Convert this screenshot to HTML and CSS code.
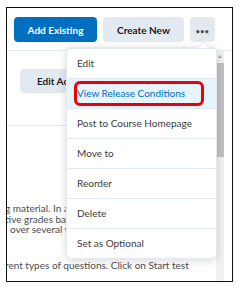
FILE: index.html
```html
<!DOCTYPE html>
<html lang="en">
<head>
    <meta charset="UTF-8">
    <title>Content Actions</title>
    <link rel="stylesheet" href="styles.css">
</head>
<body>
    <div class="frame">
        <div class="toolbar">
            <button class="btn btn-primary btn-add">Add Existing</button>
            <button class="btn btn-create">Create New</button>
            <button class="btn btn-more"><span class="dots">&bull;&bull;&bull;</span></button>
        </div>

        <div class="panel">
            <div class="content">
                <button class="btn btn-edit">Edit Activity</button>
                <hr class="divider">
                <p class="body-text">g material. In addition to the readings you will<br>tive grades based on the quizzes that are<br>l over several weeks of the term.</p>
                <p class="body-text last">rent types of questions. Click on Start test</p>
            </div>
            <div class="scrollbar">
                <div class="scroll-arrow"></div>
                <div class="scroll-thumb"></div>
            </div>
        </div>

        <!-- dropdown menu of the ... button -->
        <div class="menu">
            <div class="menu-caret"></div>
            <div class="menu-item">Edit</div>
            <div class="menu-item active">View Release Conditions<span class="highlight"></span></div>
            <div class="menu-item">Post to Course Homepage</div>
            <div class="menu-item">Move to</div>
            <div class="menu-item">Reorder</div>
            <div class="menu-item">Delete</div>
            <div class="menu-item">Set as Optional</div>
        </div>
    </div>
</body>
</html>
```

FILE: styles.css
```css
body {
    margin: 0;
    background: #fff;
    font-family: 'Lato', 'Liberation Sans', sans-serif;
    color: #494c4e;
}
.frame {
    position: relative;
    box-sizing: border-box;
    width: 227px;
    height: 275px;
    margin: 7px 0 0 6px;
    border: 1px solid #111;
    overflow: hidden;
}
.toolbar {
    display: flex;
    gap: 6px;
    padding: 9px 0 0 7px;
}
.btn {
    font-family: inherit;
    font-size: 10px;
    font-weight: 700;
    height: 25px;
    border: none;
    border-radius: 4px;
    padding: 0;
    color: #202122;
    background-color: #e3e9f1;
}
.btn-primary {
    background-color: #006fbf;
    color: #fff;
}
.btn-add {
    width: 83px;
}
.btn-create {
    width: 81px;
}
.btn-more {
    width: 25px;
}
.dots {
    font-size: 7px;
    letter-spacing: 0.5px;
    color: #494c4e;
}
.panel {
    display: flex;
    margin-top: 8px;
    padding-right: 8px;
    border-top: 1px solid #e3e9f1;
    height: 240px;
}
.content {
    flex: 1;
    overflow: hidden;
    padding-top: 18px;
}
.btn-edit {
    width: 82px;
    height: 24px;
    margin-left: 13px;
    text-align: left;
    padding-left: 17px;
}
.divider {
    border: none;
    border-top: 1px solid #e3e9f1;
    margin: 32px 0 0 0;
}
.body-text {
    font-size: 10px;
    line-height: 10.5px;
    white-space: nowrap;
    margin: 77px 0 0 -2px;
    color: #494c4e;
}
.body-text.last {
    margin-top: 25px;
}
.scrollbar {
    width: 8px;
    background-color: #f1f1f1;
    display: flex;
    flex-direction: column;
    align-items: center;
}
.scroll-arrow {
    width: 0;
    height: 0;
    margin: 4px 0 5px;
    border-left: 2.5px solid transparent;
    border-right: 2.5px solid transparent;
    border-bottom: 3px solid #a3a3a3;
}
.scroll-thumb {
    width: 7px;
    height: 94px;
    background-color: #c1c1c1;
}
.menu {
    position: absolute;
    left: 59px;
    top: 39px;
    width: 149px;
    background: #fff;
    border: 1px solid #e3e9f1;
    border-radius: 5px;
    box-shadow: 0 2px 10px rgba(0, 0, 0, 0.15);
}
.menu-caret {
    position: absolute;
    left: 132px;
    top: -5px;
    width: 8px;
    height: 8px;
    background: #fff;
    border-left: 1px solid #e3e9f1;
    border-top: 1px solid #e3e9f1;
    transform: rotate(45deg);
}
.menu-item {
    position: relative;
    height: 29px;
    line-height: 29px;
    padding-left: 10px;
    font-size: 10px;
    color: #393b3d;
    border-top: 1px solid #e3e9f1;
}
.menu-item:first-of-type {
    border-top: none;
    height: 30px;
    line-height: 30px;
}
.menu-item.active {
    background-color: #e6f4fd;
    color: #006fbf;
}
.highlight {
    position: absolute;
    left: 7px;
    top: 2px;
    width: 124px;
    height: 19px;
    border: 3px solid #e8000b;
    border-radius: 6px;
}
```
